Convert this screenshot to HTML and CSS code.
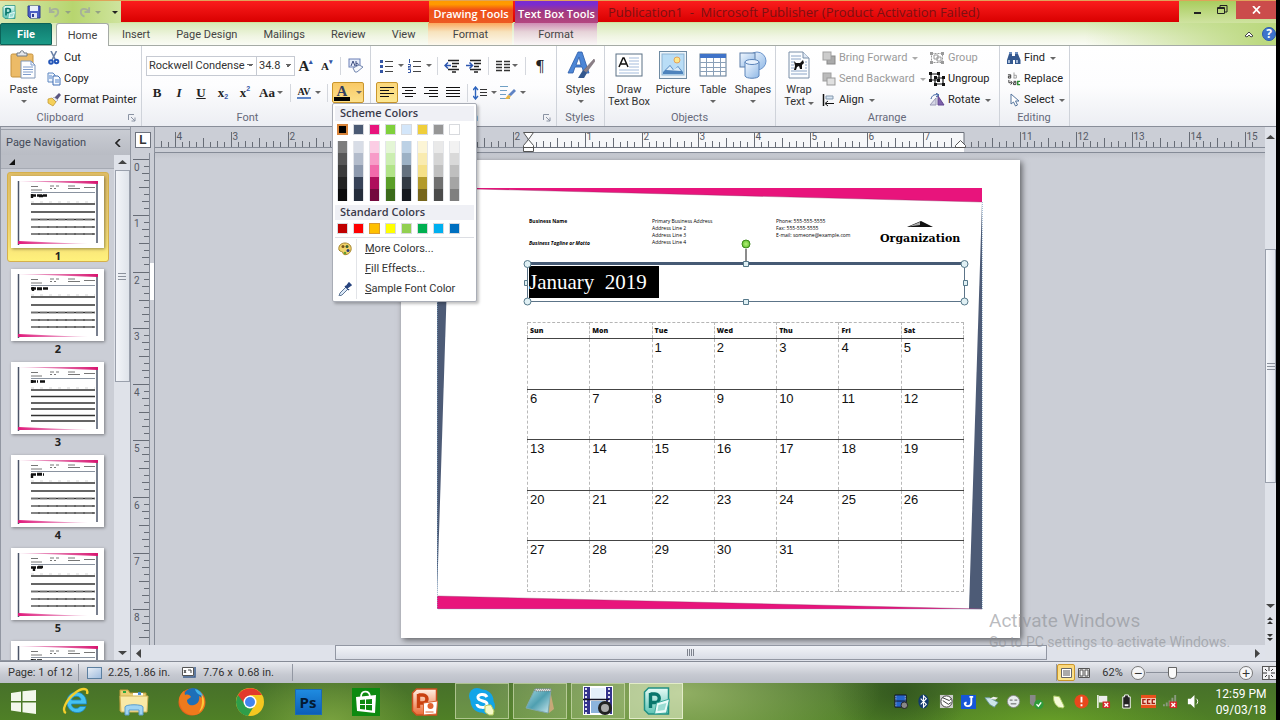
FILE: index.html
```html
<!DOCTYPE html>
<html lang="en">
<head>
<meta charset="utf-8">
<title>Publication1 - Microsoft Publisher</title>
<link rel="stylesheet" href="styles.css">
</head>
<body>
<svg class="defs" width="0" height="0" aria-hidden="true">
  <defs>
    <linearGradient id="g-blue" x1="0" y1="0" x2="1" y2="1"><stop offset="0" stop-color="#f2f8ff"/><stop offset="1" stop-color="#8fb8e6"/></linearGradient>
    <linearGradient id="g-teal" x1="0" y1="0" x2="0" y2="1"><stop offset="0" stop-color="#e6fbf6"/><stop offset="1" stop-color="#5cc4b4"/></linearGradient>
    <linearGradient id="g-orange" x1="0" y1="0" x2="0" y2="1"><stop offset="0" stop-color="#fff1e4"/><stop offset="1" stop-color="#ec6a35"/></linearGradient>
    <linearGradient id="g-pad" x1="0" y1="0" x2="1" y2="1"><stop offset="0" stop-color="#a9dbe4"/><stop offset=".5" stop-color="#4f9fb0"/><stop offset="1" stop-color="#cfeaf0"/></linearGradient>
    <linearGradient id="g-pink" x1="0" x2="1"><stop offset="0" stop-color="#e0187a"/><stop offset="1" stop-color="#d9509a" stop-opacity=".3"/></linearGradient>
    <linearGradient id="g-pinkr" x1="1" x2="0"><stop offset="0" stop-color="#d8146f"/><stop offset="1" stop-color="#d9509a" stop-opacity=".4"/></linearGradient>
    <radialGradient id="g-rot"><stop offset="0" stop-color="#b6f27a"/><stop offset="1" stop-color="#62c12c"/></radialGradient>
  </defs>
  <symbol id="i-pub" viewBox="0 0 28 28"><path d="M6 1h20v26H6l-4-4V5z" fill="url(#g-teal)" stroke="#1f8f83" stroke-width="1.5"/><path d="M8 6v15M8 7h4.500a4 4 0 0 1 0 8.500H8" fill="none" stroke="#08766c" stroke-width="3.400"/><path d="M14 16l13-4-3 14-12 1z" fill="#e8fbf8" stroke="#39a89b"/><path d="M16 18l8-2-2 7-7 1z" fill="#9adcd3"/></symbol>
  <symbol id="i-ppt" viewBox="0 0 28 28"><path d="M6 1h20v26H6l-4-4V5z" fill="url(#g-orange)" stroke="#c9501f" stroke-width="1.500"/><path d="M8 6v14M8 7h4.500a4 4 0 0 1 0 8H8" fill="none" stroke="#c9400f" stroke-width="3.400"/><path d="M13 15l14-2-1 13-13 1z" fill="#fff" stroke="#d9622f"/><circle cx="20" cy="18" r="3" fill="#e0622f"/><path d="M15 24h8" stroke="#e0622f"/></symbol>
  <symbol id="i-save" viewBox="0 0 14 14"><path d="M1 1h12v12H3l-2-2z" fill="#4c5fc4" stroke="#2e3c91"/><path d="M3 1h8v5H3z" fill="#e9f0fb"/><path d="M4 8h6v5H4z" fill="#dfe4f4"/><path d="M5 9h2v3H5z" fill="#2e3c91"/></symbol>
  <symbol id="i-undo" viewBox="0 0 14 12"><path d="M2 1v5h5M2.500 5.500C5 1.500 11 1.500 11 6c0 2-1.500 4-4 5" fill="none" stroke="#a6b19a" stroke-width="2"/></symbol>
  <symbol id="i-paste" viewBox="0 0 28 30"><rect x="1" y="4" width="22" height="23" rx="1.500" fill="#ecbb67" stroke="#c4913d"/><path d="M7 6V3h3c0-3 4-3 4 0h3v3z" fill="#e2e5ea" stroke="#6f7883"/><path d="M11 11h10l4 4v13H11z" fill="#fdfeff" stroke="#8197b7"/><path d="M21 11v4h4M13 17h10M13 19.500h10M13 22h10M13 24.500h8" fill="none" stroke="#7e9ccc"/></symbol>
  <symbol id="i-cut" viewBox="0 0 14 14"><path d="M4 0l4.500 9M9.500 0L5 9" stroke="#6b82a8" stroke-width="1.600"/><circle cx="4" cy="11" r="1.800" fill="none" stroke="#2456b8" stroke-width="2"/><circle cx="9.500" cy="10.500" r="1.800" fill="none" stroke="#2456b8" stroke-width="2"/></symbol>
  <symbol id="i-copy" viewBox="0 0 14 14"><path d="M1 1h5l2 2v7H1z" fill="#eef5fe" stroke="#5c86c0"/><path d="M6 4h5l2 2v7H6z" fill="#f8fbff" stroke="#3e6db3"/><path d="M2 4h3M2 6h3M8 8h4M8 10h4" stroke="#5686cb"/></symbol>
  <symbol id="i-brush" viewBox="0 0 14 14"><path d="M12 0l2 2-4 5-3-2z" fill="#5a5680"/><path d="M7 4l4 3-2 2-4-3z" fill="#e8ecf3" stroke="#8a8a9a" stroke-width=".5"/><path d="M1 6l4-1 4 4-3 4-5-3z" fill="#f5d05a" stroke="#be922a" stroke-width=".7"/></symbol>
  <symbol id="i-launch" viewBox="0 0 8 8"><path d="M.5 6V.5H6" fill="none" stroke="#8a93a3"/><path d="M3 3l4 4M7 3.500V7H3.500" fill="none" stroke="#8a93a3"/></symbol>
  <symbol id="i-clear" viewBox="0 0 16 16"><rect x="1" y="1" width="11" height="8" fill="#e8eefb" stroke="#6a7fb5"/><path d="M3 8l2-5 2 5M8 3v5M8 5.500c3-1 3 2.500 0 2" stroke="#38497d" fill="none"/><path d="M5 10l6-3 4 2-6 5H7z" fill="#f7f9fd" stroke="#7588b0"/></symbol>
  <symbol id="i-bul" viewBox="0 0 14 14"><path d="M0 1h3v3H0zM0 6h3v3H0zM0 11h3v3H0z" fill="#3556a5"/><path d="M5 2.500h8M5 7.500h8M5 12.500h8" stroke="#444"/></symbol>
  <symbol id="i-num" viewBox="0 0 14 14"><path d="M1.500 0v4M0 5.500h2.500v2H0V9h3M0 10.500h2.500v3H0" stroke="#3556a5" fill="none"/><path d="M5 2.500h8M5 7.500h8M5 12.500h8" stroke="#444"/></symbol>
  <symbol id="i-dedent" viewBox="0 0 16 14"><path d="M4 1.500h11M8 4.500h7M8 7.500h5M4 10.500h11M8 13h4" stroke="#222" stroke-width="1.300"/><path d="M7 6.500H1M4 3.500l-3 3 3 3" fill="none" stroke="#2c56b0" stroke-width="1.500"/></symbol>
  <symbol id="i-indent" viewBox="0 0 16 14"><path d="M4 1.500h11M8 4.500h7M8 7.500h5M4 10.500h11M8 13h4" stroke="#222" stroke-width="1.300"/><path d="M0 6.500h6M3.500 3.500l3 3-3 3" fill="none" stroke="#2c56b0" stroke-width="1.500"/></symbol>
  <symbol id="i-cols" viewBox="0 0 14 12"><path d="M0 1.500h6M0 4.500h6M0 7.500h6M0 10.500h6M8 1.500h6M8 4.500h6M8 7.500h6M8 10.500h6" stroke="#333" stroke-width="1.300"/></symbol>
  <symbol id="i-left" viewBox="0 0 14 12"><path d="M0 .5h14M0 3.500h9M0 6.500h14M0 9.500h9" stroke="#111"/></symbol>
  <symbol id="i-center" viewBox="0 0 14 12"><path d="M0 .5h14M3 3.500h8M0 6.500h14M3 9.500h8" stroke="#111"/></symbol>
  <symbol id="i-right" viewBox="0 0 14 12"><path d="M0 .5h14M5 3.500h9M0 6.500h14M5 9.500h9" stroke="#111"/></symbol>
  <symbol id="i-just" viewBox="0 0 14 12"><path d="M0 .5h14M0 3.500h14M0 6.500h14M0 9.500h14" stroke="#111"/></symbol>
  <symbol id="i-space" viewBox="0 0 14 14"><path d="M2.500 1v12M0 4l2.500-3L5 4M0 10l2.500 3L5 10" fill="none" stroke="#2c63bd" stroke-width="1.400"/><path d="M7 3.500h7M7 6.500h7M7 9.500h7" stroke="#333"/></symbol>
  <symbol id="i-pstyle" viewBox="0 0 16 15"><path d="M0 1.500h8M0 5.500h7M0 9.500h6M0 13.500h10" stroke="#6f9fc4"/><path d="M14 4l2 2-5 5-3-1z" fill="#5f83c4"/><path d="M8 10l3 1-2 3-4 0z" fill="#e7b440"/></symbol>
  <symbol id="i-styles" viewBox="0 0 28 28"><path d="M11 1h4l7 21h-5l-2-6H8l-2 6H1zM12 6l-3 8h5z" fill="#4c86d6" stroke="#2c5ca8" stroke-width=".8"/><path d="M27 8l1 2-9 12-3-2z" fill="#8b7f86" stroke="#6b5f66" stroke-width=".5"/><path d="M16 19l4 3-3 5-6 0z" fill="#35598f"/></symbol>
  <symbol id="i-tbox" viewBox="0 0 28 28"><rect x="1" y="3" width="26" height="22" fill="#fff" stroke="#5b7185"/><path d="M4 16l4-9h1l4 9M6 13h5" fill="none" stroke="#111" stroke-width="1.500"/><path d="M14 7h10M14 10h10M14 13h10M14 16h10M4 19h20M4 22h20" stroke="#a3bbdc"/></symbol>
  <symbol id="i-pic" viewBox="0 0 28 28"><rect x=".5" y=".5" width="27" height="27" fill="#eef5fa" stroke="#6f8ba3"/><rect x="3" y="3" width="22" height="21" fill="#b9ddf6" stroke="#8db3d2"/><circle cx="18" cy="9" r="3" fill="#fde88a" stroke="#e5a35c"/><path d="M4 21l7-7 4 5 4-4 5 6v2H4z" fill="#4d83bd"/><path d="M7 19l4-4 3 4 5-3 3 4z" fill="#dcedf9"/></symbol>
  <symbol id="i-table" viewBox="0 0 28 28"><rect x="1" y="3" width="26" height="22" fill="#fff" stroke="#5c7690"/><path d="M1 3h26v4H1z" fill="#3f73c8"/><path d="M1 11.500h26M1 16.500h26M1 20.500h26M7.500 7v18M14.500 7v18M21.500 7v18" stroke="#8aa0b8"/></symbol>
  <symbol id="i-shapes" viewBox="0 0 28 28"><circle cx="18" cy="10" r="9" fill="url(#g-blue)" stroke="#6b94cb"/><rect x="1" y="2" width="15" height="14" fill="url(#g-blue)" stroke="#5b7ca8"/><path d="M6 11v14c1 3 13 3 14 0V11z" fill="url(#g-blue)" stroke="#5b84ba"/><ellipse cx="13" cy="11" rx="7" ry="2.500" fill="#e6f1fd" stroke="#5b84ba"/></symbol>
  <symbol id="i-wrap" viewBox="0 0 26 28"><path d="M3 1h14l6 6v20H3z" fill="#fbfdff" stroke="#7a8fa8"/><path d="M17 1v6h6" fill="#dfe9f5" stroke="#7a8fa8"/><path d="M5 5h10M5 8h10M5 11h3M19 11h2M5 14h3M19 14h2M5 17h3M19 17h2M5 20h16M5 23h16" stroke="#8ba4c6"/><path d="M8 10l2 2h4l3-3 1 3-2 2v4h-2l-1-3-2 1-1 3H8l1-4z" fill="#111"/></symbol>
  <symbol id="i-fwd" viewBox="0 0 14 14"><rect x="5" y="5" width="8" height="8" fill="#aaa" stroke="#888"/><rect x="1" y="1" width="8" height="8" fill="#ccc" stroke="#a0a0a0"/></symbol>
  <symbol id="i-back" viewBox="0 0 14 14"><rect x="1" y="1" width="8" height="8" fill="#bbb" stroke="#a0a0a0"/><rect x="5" y="6" width="8" height="7" fill="#e0e0e0" stroke="#999"/></symbol>
  <symbol id="i-align" viewBox="0 0 14 14"><path d="M1.500 1v12" stroke="#111" stroke-width="1.500"/><path d="M4 3h7v3H4z" fill="#d8e6f3" stroke="#8397ac"/><path d="M4 10.500h8M6 8l-3 2.500L6 13" stroke="#111" fill="none"/></symbol>
  <symbol id="i-group" viewBox="0 0 16 14"><path d="M2.500 2.500h11v9h-11z" fill="none" stroke="currentColor" stroke-dasharray="2 1"/><path d="M1 1h3v3H1zM12 1h3v3h-3zM1 10h3v3H1zM12 10h3v3h-3z" fill="currentColor"/><path d="M5 4h4v4H5zM8 6h4v4H8z" fill="#fff" stroke="currentColor"/></symbol>
  <symbol id="i-ungroup" viewBox="0 0 16 14"><path d="M2 2h8v6H2zM6 6h8v6H6z" fill="none" stroke="#111" stroke-width="1.200"/><path d="M0 0h3v3H0zM8 0h3v3H8zM0 7h3v3H0zM8 7h3v3H8zM5 4h3v3H5zM13 4h3v3h-3zM5 11h3v3H5zM13 11h3v3h-3z" fill="#111"/></symbol>
  <symbol id="i-rot" viewBox="0 0 16 14"><path d="M1 12L7 5v7z" fill="#d6d6e6" stroke="#9a9ab5"/><path d="M9 12V3l6 9z" fill="#7e62ac" stroke="#604590"/><path d="M2 6c1-4 4-5 7-4M7 0l3 2-3 2" fill="none" stroke="#345a9c"/></symbol>
  <symbol id="i-find" viewBox="0 0 14 14"><path d="M2 3h3v2h3V3h3l2.500 6v4H8V9H6v4H0V9z" fill="#35598f"/><path d="M2 1h3v2H2zM8 1h3v2H8z" fill="#6d8fc0"/><path d="M2 9v3M10 9v3" stroke="#c7d9ef" stroke-width="1.500"/></symbol>
  <symbol id="i-repl" viewBox="0 0 15 14"><path d="M1 2.500h3V6H1.500V4H4" fill="none" stroke="#333"/><path d="M7.500 0v6M7.500 3h2.500v3H7" fill="none" stroke="#999"/><path d="M2 8v3h3M4 9l1.500 2L4 13" fill="none" stroke="#333"/><path d="M7 9.500h2.500V13H7v-2h2" fill="none" stroke="#333"/><path d="M14 9.500h-2.500V13H14" fill="none" stroke="#2a8a32" stroke-width="1.500"/></symbol>
  <symbol id="i-ptr" viewBox="0 0 12 14"><path d="M3 1v10l2.500-2 2 4 2-1-2-4H11z" fill="#fff" stroke="#54749d"/></symbol>
  <symbol id="i-palette" viewBox="0 0 14 14"><path d="M7 1c4 0 7 3 6 7-1 5-8 6-8 3 0-2-3-1-4-3C0 4 3 1 7 1z" fill="#f1d36a" stroke="#a5842b"/><circle cx="5" cy="4.500" r="1.500" fill="#7c5418"/><circle cx="9" cy="4.500" r="1.500" fill="#3a5f30"/><circle cx="10" cy="8.500" r="1.500" fill="#263d80"/><circle cx="7" cy="11" r="1.300" fill="#66a02e"/></symbol>
  <symbol id="i-drop" viewBox="0 0 14 14"><path d="M8 5l2 2-6 6-3 1 1-3z" fill="#dce9f8" stroke="#5f7796"/><path d="M7 4l4 4M8 5l3-4 2 2-4 3z" fill="#27437e" stroke="#27437e" stroke-width="1.500"/></symbol>
  <symbol id="thumb" viewBox="0 0 93 72"><path d="M7.500 5v64" stroke="#4b5468" stroke-width="1.500"/><path d="M86 6v61" stroke="#4b5468" stroke-width="1.500"/><path d="M7 5h80v3z" fill="url(#g-pinkr)"/><path d="M7 65l70 3H7z" fill="url(#g-pink)"/><path d="M20 10.500h7M20 14h11M39 10h4M45 10h3M39 12.500h2M43 12.500h2M57 10h7M57 12.500h12M73 11.500h11" stroke="#777"/><path d="M20 16.500h64" stroke="#8a93a0"/><path d="M20 26h64" stroke="#bbb" stroke-width=".6" stroke-dasharray="3 6"/></symbol>
  <symbol id="rows5" viewBox="0 0 93 72"><path d="M20 28h64M20 36h64M20 43.500h64M20 51h64M20 58h64" stroke="#333" stroke-width="1.300"/><path d="M20 43.500h64M20 51h64M20 58h64" stroke="#999" stroke-width="2" stroke-dasharray="7 2" opacity=".6"/></symbol>
  <symbol id="rows6" viewBox="0 0 93 72"><path d="M20 28h64M20 34.500h64M20 41h64M20 47h64M20 53.500h64M20 59h64" stroke="#333" stroke-width="1.300"/></symbol>
</svg>

<header class="titlebar">
  <div class="quick">
    <svg class="app" viewBox="0 0 28 28"><use href="#i-pub"/></svg>
    <span class="vline"></span>
    <button aria-label="Save"><svg width="14" height="14"><use href="#i-save"/></svg></button>
    <button class="off" aria-label="Undo"><svg width="13" height="12"><use href="#i-undo"/></svg><i class="caret"></i></button>
    <button class="off redo" aria-label="Redo"><svg width="13" height="12"><use href="#i-undo"/></svg><i class="caret"></i></button>
    <span class="vline"></span>
    <button aria-label="Customize"><i class="caret bar"></i></button>
  </div>
  <div class="banner">
    <span class="ctx drawing">Drawing Tools</span>
    <span class="ctx textbox">Text Box Tools</span>
    <h1>Publication1&nbsp; -&nbsp; Microsoft Publisher (Product Activation Failed)</h1>
  </div>
  <div class="winbtns">
    <button aria-label="Minimize"><svg width="10" height="10" viewBox="0 0 10 10"><path d="M1 8h7" stroke="#222" stroke-width="2"/></svg></button>
    <button aria-label="Restore"><svg width="11" height="10" viewBox="0 0 11 10"><path d="M3 2V.5h7V7H8M.5 2.500h7v6h-7zM.5 3.500h7" fill="none" stroke="#222"/></svg></button>
    <button class="close" aria-label="Close"><svg width="9" height="8" viewBox="0 0 9 8"><path d="M1 0l7 7.500M8 0L1 7.500" stroke="#fff" stroke-width="1.800"/></svg></button>
  </div>
</header>

<nav class="tabs">
  <button class="tab file">File</button>
  <button class="tab home">Home</button>
  <button class="tab">Insert</button>
  <button class="tab">Page Design</button>
  <button class="tab">Mailings</button>
  <button class="tab">Review</button>
  <button class="tab">View</button>
  <button class="tab tdraw">Format</button>
  <button class="tab ttext">Format</button>
  <span class="grow"></span>
  <button class="mini" aria-label="Collapse ribbon"><svg width="10" height="8" viewBox="0 0 10 8"><path d="M1 6l4-4 4 4-2 1-2-2-2 2z" fill="#fff" stroke="#444"/></svg></button>
  <button class="help" aria-label="Help">?</button>
</nav>

<main class="ribbon">
  <section class="group clipboard">
    <div class="cols">
      <button class="big"><svg width="28" height="30"><use href="#i-paste"/></svg><span>Paste</span><i class="caret"></i></button>
      <div class="stack">
        <button><svg width="14" height="14"><use href="#i-cut"/></svg>Cut</button>
        <button><svg width="14" height="14"><use href="#i-copy"/></svg>Copy</button>
        <button><svg width="14" height="14"><use href="#i-brush"/></svg>Format Painter</button>
      </div>
    </div>
    <footer><span>Clipboard</span><svg width="8" height="8"><use href="#i-launch"/></svg></footer>
  </section>

  <section class="group font">
    <div class="rows">
      <div class="row">
        <select class="face" aria-label="Font"><option>Rockwell Condense</option></select><select class="size" aria-label="Font size"><option>34.8</option></select>
        <button class="t serif grow-a" aria-label="Grow font">A<sup>▴</sup></button>
        <button class="t serif shrink-a" aria-label="Shrink font">A<sup>▾</sup></button>
        <span class="sep"></span>
        <button class="t" aria-label="Clear formatting"><svg width="16" height="16"><use href="#i-clear"/></svg></button>
      </div>
      <div class="row">
        <button class="t serif">B</button>
        <button class="t serif"><em>I</em></button>
        <button class="t serif"><u>U</u></button>
        <button class="t serif">x<sub>2</sub></button>
        <button class="t serif">x<sup>2</sup></button>
        <button class="t serif wide">Aa<i class="caret"></i></button>
        <span class="sep"></span>
        <button class="t av"><span>AV</span><i class="caret"></i></button>
        <span class="sep"></span>
        <div class="drop">
          <button class="fcolor" aria-label="Font color"><span class="serif">A</span><i class="caret"></i></button>
          <div class="menu">
            <h2>Scheme Colors</h2>
            <div class="sw" id="scheme"></div>
            <div class="shades" id="shades"></div>
            <h2>Standard Colors</h2>
            <div class="sw" id="standard"></div>
            <ul>
              <li><button><svg width="14" height="14"><use href="#i-palette"/></svg><span><u>M</u>ore Colors...</span></button></li>
              <li><button><svg width="14" height="14"></svg><span><u>F</u>ill Effects...</span></button></li>
              <li><button><svg width="14" height="14"><use href="#i-drop"/></svg><span><u>S</u>ample Font Color</span></button></li>
            </ul>
          </div>
        </div>
      </div>
    </div>
    <footer><span>Font</span></footer>
  </section>

  <section class="group para">
    <div class="rows">
      <div class="row first">
        <button class="t wd" aria-label="Bullets"><svg width="14" height="14"><use href="#i-bul"/></svg><i class="caret"></i></button>
        <button class="t wd" aria-label="Numbering"><svg width="14" height="14"><use href="#i-num"/></svg><i class="caret"></i></button>
        <span class="sep"></span>
        <button class="t" aria-label="Decrease indent"><svg width="16" height="14"><use href="#i-dedent"/></svg></button>
        <button class="t" aria-label="Increase indent"><svg width="16" height="14"><use href="#i-indent"/></svg></button>
        <span class="sep"></span>
        <button class="t wide" aria-label="Columns"><svg width="14" height="12"><use href="#i-cols"/></svg><i class="caret"></i></button>
        <span class="sep"></span>
        <button class="t pil">¶</button>
      </div>
      <div class="row">
        <button class="t on" aria-label="Align left"><svg width="14" height="12"><use href="#i-left"/></svg></button>
        <button class="t" aria-label="Center"><svg width="14" height="12"><use href="#i-center"/></svg></button>
        <button class="t" aria-label="Align right"><svg width="14" height="12"><use href="#i-right"/></svg></button>
        <button class="t" aria-label="Justify"><svg width="14" height="12"><use href="#i-just"/></svg></button>
        <span class="sep"></span>
        <button class="t wd" aria-label="Line spacing"><svg width="14" height="14"><use href="#i-space"/></svg><i class="caret"></i></button>
        <button class="t wd" aria-label="Paragraph styles"><svg width="16" height="15"><use href="#i-pstyle"/></svg><i class="caret"></i></button>
      </div>
    </div>
    <footer><span>Paragraph</span><svg width="8" height="8"><use href="#i-launch"/></svg></footer>
  </section>

  <section class="group styles">
    <div class="cols"><button class="big"><svg width="28" height="30"><use href="#i-styles"/></svg><span>Styles</span><i class="caret"></i></button></div>
    <footer><span>Styles</span></footer>
  </section>

  <section class="group objects">
    <div class="cols">
      <button class="big w48"><svg width="28" height="30"><use href="#i-tbox"/></svg><span>Draw<br>Text Box</span></button>
      <button class="big"><svg width="28" height="30"><use href="#i-pic"/></svg><span>Picture</span></button>
      <button class="big"><svg width="28" height="30"><use href="#i-table"/></svg><span>Table</span><i class="caret"></i></button>
      <button class="big"><svg width="28" height="30"><use href="#i-shapes"/></svg><span>Shapes</span><i class="caret"></i></button>
    </div>
    <footer><span>Objects</span></footer>
  </section>

  <section class="group arrange">
    <div class="cols">
      <button class="big"><svg width="26" height="30"><use href="#i-wrap"/></svg><span>Wrap<br>Text <i class="caret"></i></span></button>
      <div class="stack">
        <button disabled><svg width="14" height="14"><use href="#i-fwd"/></svg>Bring Forward<i class="caret"></i></button>
        <button disabled><svg width="14" height="14"><use href="#i-back"/></svg>Send Backward<i class="caret"></i></button>
        <button><svg width="14" height="14"><use href="#i-align"/></svg>Align<i class="caret"></i></button>
      </div>
      <div class="stack">
        <button disabled><svg width="16" height="14"><use href="#i-group"/></svg>Group</button>
        <button><svg width="16" height="14"><use href="#i-ungroup"/></svg>Ungroup</button>
        <button><svg width="16" height="14"><use href="#i-rot"/></svg>Rotate<i class="caret"></i></button>
      </div>
    </div>
    <footer><span>Arrange</span></footer>
  </section>

  <section class="group editing">
    <div class="cols"><div class="stack">
      <button><svg width="14" height="14"><use href="#i-find"/></svg>Find<i class="caret"></i></button>
      <button><svg width="14" height="14"><use href="#i-repl"/></svg>Replace</button>
      <button><svg width="14" height="14"><use href="#i-ptr"/></svg>Select<i class="caret"></i></button>
    </div></div>
    <footer><span>Editing</span></footer>
  </section>
</main>

<div class="work">
  <aside class="pane">
    <header>Page Navigation<svg width="6" height="8" viewBox="0 0 6 8"><path d="M5 0L1 4l4 4" fill="none" stroke="#222" stroke-width="1.600"/></svg></header>
    <div class="panebody">
      <div class="left">
        <div class="strip"><svg width="6" height="6" viewBox="0 0 6 6"><path d="M6 0v6H0z" fill="#111"/></svg></div>
        <ol class="thumbs" id="thumbs"></ol>
      </div>
      <div class="vbar">
        <svg width="9" height="6" viewBox="0 0 9 6"><path d="M4.500 1L9 5H0z" fill="#444"/></svg>
        <div class="vthumb"><i></i></div>
        <svg class="end" width="9" height="6" viewBox="0 0 9 6"><path d="M4.500 5L9 1H0z" fill="#444"/></svg>
      </div>
    </div>
  </aside>

  <div class="editor">
    <div class="corner"><span>L</span></div>
    <svg class="hruler" id="hruler" width="100%" height="26"></svg>
    <svg class="vruler" id="vruler" width="24" height="100%"></svg>
    <div class="canvas">
      <article class="page">
        <svg class="deco" viewBox="0 0 619 477" aria-hidden="true">
          <path d="M36 28h13L36 436z" fill="#4d5b76"/>
          <path d="M581 42v407h-13z" fill="#4d5b76"/>
          <path d="M36 28h545v14z" fill="#e8147c"/>
          <path d="M36 436v13h545z" fill="#e8147c"/>
          <path d="M36 28l545 14M36 436l545 13" stroke="#8a2a5c" stroke-width=".6" opacity=".6"/>
          <path d="M36.500 28v421h545V42" fill="none" stroke="#7fa3c4" stroke-width=".7" stroke-dasharray="1 1"/>
        </svg>
        <header class="letter">
          <div class="biz"><strong>Business Name</strong><em>Business Tagline or Motto</em></div>
          <address>Primary Business Address<br>Address Line 2<br>Address Line 3<br>Address Line 4</address>
          <address>Phone: 555-555-5555<br>Fax: 555-555-5555<br>E-mail: someone@example.com</address>
          <div class="org"><svg width="26" height="6" viewBox="0 0 26 6"><path d="M0 6L14 0l12 6z" fill="#111"/><path d="M2 5.500L13 1v3z" fill="#aaa"/></svg>Organization</div>
        </header>
        <div class="tbox">
          <span class="sel">January&nbsp; 2019</span>
          <svg class="handles" viewBox="0 0 450 72" width="450" height="72" aria-hidden="true">
            <path d="M6.500 26v38.500h437V26" fill="none" stroke="#5c7488"/>
            <path d="M6 26.500h438" stroke="#465a74" stroke-width="3"/>
            <path d="M225 12v14" stroke="#666" stroke-width="1.500"/>
            <circle cx="225" cy="7" r="4" fill="url(#g-rot)" stroke="#3f8a1e"/>
            <g fill="#e0f0f4" stroke="#56798a"><circle cx="6.500" cy="27" r="3.500"/><circle cx="443.500" cy="27" r="3.500"/><circle cx="6.500" cy="64.500" r="3.500"/><circle cx="443.500" cy="64.500" r="3.500"/><path d="M222.500 24.500h5v5h-5zM222.500 62.500h5v5h-5zM442.500 43.500h4v5h-4zM3.500 43.500h3v5h-3z"/></g>
          </svg>
        </div>
        <table class="cal">
          <thead><tr><th>Sun</th><th>Mon</th><th>Tue</th><th>Wed</th><th>Thu</th><th>Fri</th><th>Sat</th></tr></thead>
          <tbody>
            <tr><td></td><td></td><td>1</td><td>2</td><td>3</td><td>4</td><td>5</td></tr>
            <tr><td>6</td><td>7</td><td>8</td><td>9</td><td>10</td><td>11</td><td>12</td></tr>
            <tr><td>13</td><td>14</td><td>15</td><td>16</td><td>17</td><td>18</td><td>19</td></tr>
            <tr><td>20</td><td>21</td><td>22</td><td>23</td><td>24</td><td>25</td><td>26</td></tr>
            <tr><td>27</td><td>28</td><td>29</td><td>30</td><td>31</td><td></td><td></td></tr>
          </tbody>
        </table>
      </article>
    </div>
    <div class="hbar">
      <svg width="6" height="9" viewBox="0 0 6 9"><path d="M0 4.500L5 0v9z" fill="#444"/></svg>
      <div class="htrack"><div class="hthumb"><i></i></div></div>
      <svg width="6" height="9" viewBox="0 0 6 9"><path d="M6 4.500L1 0v9z" fill="#444"/></svg>
    </div>
    <div class="mark"><p>Activate Windows</p><p>Go to PC settings to activate Windows.</p></div>
  </div>

  <div class="vbar right">
    <svg width="9" height="6" viewBox="0 0 9 6"><path d="M4.500 1L9 5H0z" fill="#444"/></svg>
    <div class="vthumb"><i></i></div>
    <div class="end">
      <svg width="9" height="6" viewBox="0 0 9 6"><path d="M4.500 5L9 1H0z" fill="#444"/></svg>
      <svg width="8" height="8" viewBox="0 0 8 8"><path d="M4 0l3 3H1zM4 4l3 3H1z" fill="#333"/></svg>
      <svg width="8" height="8" viewBox="0 0 8 8"><path d="M4 4l3-3H1zM4 8l3-3H1z" fill="#333"/></svg>
    </div>
  </div>
</div>

<footer class="status">
  <span class="pg">Page: 1 of 12</span>
  <span class="vl"></span>
  <svg width="15" height="12" viewBox="0 0 15 12"><rect x=".5" y=".5" width="14" height="11" fill="url(#g-blue)" fill-opacity=".7" stroke="#5c7fa0"/></svg>
  <span class="pos">2.25, 1.86 in.</span>
  <svg width="14" height="11" viewBox="0 0 14 11"><path d="M.5.5h11v8H.5z" fill="#fff" stroke="#555"/><path d="M2 3l2 3M4 3L2 6M6 3h3v3" stroke="#444" fill="none"/><path d="M13 0v10H1" fill="none" stroke="#3c5f8f" stroke-width="1.500"/></svg>
  <span class="dim">7.76 x&nbsp; 0.68 in.</span>
  <span class="vl"></span>
  <span class="grow"></span>
  <span class="vl"></span>
  <button class="on" aria-label="Single page"><svg width="11" height="10" viewBox="0 0 11 10"><path d="M.5.5h10v9H.5z" fill="#fff" stroke="#666"/><path d="M2 3h7M2 5h7M2 7h7" stroke="#555"/></svg></button>
  <button aria-label="Two-page spread"><svg width="12" height="10" viewBox="0 0 12 10"><path d="M.5.5h11v9H.5z" fill="#ddd" stroke="#555"/><path d="M2 2h3v6H2zM7 2h3v6H7z" fill="#fff" stroke="#555"/></svg></button>
  <span class="pct">62%</span>
  <button class="zoom" aria-label="Zoom out">−</button>
  <input type="range" min="0" max="100" value="27" aria-label="Zoom">
  <button class="zoom" aria-label="Zoom in">+</button>
  <button class="fit" aria-label="Fit page"><svg width="14" height="14" viewBox="0 0 14 14"><rect x=".5" y=".5" width="16" height="13" fill="#f2f2f4" stroke="#555"/><path d="M7 1v4M7 9v4M1 7h4M9 7h4M3 3l2 2M11 3L9 5M3 11l2-2M11 11L9 9" stroke="#333"/></svg></button>
</footer>

<footer class="taskbar">
  <button class="start" aria-label="Start"><svg width="26" height="24" viewBox="0 0 26 24"><path d="M0 3l10-1.500V11H0zM11.500 1.300L25 0v11H11.500zM0 12.500h10V22L0 20.500zM11.500 12.500H25V24l-13.500-1.800z" fill="#f3f7ec"/></svg></button>
  <button class="app" aria-label="Internet Explorer"><svg width="30" height="30" viewBox="0 0 30 30"><path d="M25.500 17H10.500c0 5 6.500 5.500 8.500 2.500h6C23 25 17 27 11.500 24.500 5 21 4 12 9 7.500c6-5 17-2 16.500 9.500zM10.500 13h9.500c-.5-5-8.500-5-9.500 0z" fill="#45c2f1" stroke="#1c86c4" stroke-width=".8"/><path d="M5 26c-5-2 0-13 9-20 6-5 14-6 12 1" fill="none" stroke="#f4cf2c" stroke-width="2.400"/></svg></button>
  <button class="app" aria-label="File Explorer"><svg width="30" height="30" viewBox="0 0 30 30"><path d="M1 3h8l2 3h16v18H1z" fill="#e9cf74" stroke="#bf9b3b"/><path d="M4 4h3v2H4z" fill="#2aa840"/><path d="M14 6h10v3H14z" fill="#fff"/><path d="M19 5h3v3h-3z" fill="#4a90d8"/><path d="M1 9h28l-1 16H2z" fill="#f9e9a6" stroke="#d1b258"/><path d="M6 28v-8c0-3 18-3 18 0v8h-4v-5H10v5z" fill="#9fd4f2" stroke="#5a9dcc"/></svg></button>
  <button class="app" aria-label="Firefox"><svg width="30" height="30" viewBox="0 0 30 30"><circle cx="15" cy="15" r="13.500" fill="#e8601c"/><circle cx="16" cy="11" r="10" fill="#1d6fb8"/><path d="M2 12C4 5 7 4 7 4l1 4c3-1 5 0 6 2l-4 3c0 4 3 6 7 5 4-1 6-5 5-9l3 2-1-5c6 6 5 16-1 20-8 5-20 1-21-14z" fill="#ee7a1c"/><path d="M24 7c5 5 4 14-2 18 3-5 4-12 2-18z" fill="#fcc838"/><path d="M18 2c4 1 7 4 8 7-4-1-7-3-8-7z" fill="#43b3e6"/></svg></button>
  <button class="app" aria-label="Chrome"><svg width="30" height="30" viewBox="0 0 30 30"><circle cx="15" cy="15" r="14" fill="#f6c720"/><path d="M15 15H15L3 8a14 14 0 0 0 10 21l6-10z" fill="#2f9e4a"/><path d="M15 8h12a14 14 0 0 0-24 0l6 8z" fill="#e23a2c"/><circle cx="15" cy="15" r="6.500" fill="#fff"/><circle cx="15" cy="15" r="5" fill="#4384ee"/></svg></button>
  <button class="app"><span class="ps">Ps</span></button>
  <button class="app" aria-label="Store"><svg width="28" height="28" viewBox="0 0 28 28"><path d="M0 0h28v28H0z" fill="#0d8a10"/><path d="M4 9l20-2-1 18-18-2z" fill="#fff"/><path d="M9 9c0-7 8-7 9-1" fill="none" stroke="#fff" stroke-width="1.800"/><path d="M8 12l5-.5V16H8zM14 11.500l6-.5v5h-6zM8 17h5v4.500L8 21zM14 17h6v5.500l-6-.8z" fill="#0d8a10"/></svg></button>
  <button class="app" aria-label="PowerPoint"><svg width="29" height="28"><use href="#i-ppt"/></svg></button>
  <button class="app run" aria-label="Skype"><svg width="30" height="30" viewBox="0 0 30 30"><circle cx="10" cy="10" r="8" fill="#12a5e8"/><circle cx="20" cy="20" r="8" fill="#12a5e8"/><circle cx="15" cy="15" r="11.500" fill="#12a5e8"/><path d="M20 11c-2-4-10-3-9 1 1 4 9 2 9 6 0 5-10 4-10 0" fill="none" stroke="#fff" stroke-width="3"/><path d="M18 20l3-1 3 0 3 6-1 4-4 0-4-3z" fill="#f6f9c8" stroke="#b5c95c"/></svg></button>
  <button class="app run" aria-label="Notepad"><svg width="30" height="30" viewBox="0 0 30 30"><path d="M25 4l4 19-5 4z" fill="#c8a878"/><path d="M10 3h16l-3 24L1 22z" fill="url(#g-pad)" stroke="#7fa8ae"/><path d="M10 3h16v2H10z" fill="#ddd" stroke="#777" stroke-dasharray="1 1"/></svg></button>
  <button class="app run" aria-label="Movie Maker"><svg width="30" height="30" viewBox="0 0 30 30"><path d="M0 0h30v29H0z" fill="#fff"/><path d="M1 1h6v27H1zM23 1h6v27h-6z" fill="#34348c"/><path d="M8 2h14v11H8z" fill="#e4f0fa"/><path d="M8 15h14v12H8z" fill="#8cb4dc"/><path d="M3 2v26M26 2v26" stroke="#dde" stroke-width="2" stroke-dasharray="2 2"/><path d="M0 13.500h26" stroke="#112" stroke-width="1.500"/><circle cx="22" cy="22" r="7" fill="#222"/><circle cx="22" cy="22" r="4" fill="#aaa"/></svg></button>
  <button class="app run cur" aria-label="Publisher"><svg width="29" height="28"><use href="#i-pub"/></svg></button>
  <span class="grow"></span>
  <div class="tray">
    <svg viewBox="0 0 16 16"><path d="M1 1h12v13H1z" fill="#2464c8" stroke="#112"/><path d="M2 2v11M12 2v11" stroke="#ccd" stroke-dasharray="1 1"/><path d="M1 7.500h12" stroke="#112"/><circle cx="11" cy="12" r="3.500" fill="#888" stroke="#222"/></svg>
    <svg viewBox="0 0 16 16"><ellipse cx="8" cy="8" rx="5.500" ry="7.500" fill="#123a6e"/><path d="M5 5l6 6-3 3V2l3 3-6 6" fill="none" stroke="#fff" stroke-width="1.200"/></svg>
    <svg viewBox="0 0 16 16"><path d="M1 1h14v14H1z" fill="#ccc"/><circle cx="8" cy="8" r="6" fill="#fff" stroke="#333"/><path d="M4 4l7 3 2-2M4 7l6 4 3-2" stroke="#333" fill="none"/></svg>
    <svg viewBox="0 0 16 16"><path d="M0 1h16v15H0z" fill="#1656d8"/><path d="M9 3h4M11 3v6c0 5-7 5-7 1l2-1" fill="none" stroke="#fff" stroke-width="2"/></svg>
    <svg viewBox="0 0 16 16"><path d="M1 4l5 0 9 5-4 5-5-3z" fill="#cde6ea" stroke="#6f9aa0"/><path d="M6 5l6 1 3-2-5-1z" fill="#eee"/></svg>
    <svg viewBox="0 0 16 16"><circle cx="8" cy="8" r="6.500" fill="#e8ecee" stroke="#888"/><path d="M4 6.500h3M9 6.500h3M5 10.500h6" stroke="#555"/></svg>
    <svg viewBox="0 0 16 16"><path d="M1 1h6v9l-3 3-3-3z" fill="#888"/><circle cx="10.500" cy="11" r="5" fill="#2f9a3a"/><path d="M8 11l2 2 3-4" fill="none" stroke="#fff" stroke-width="1.500"/></svg>
    <svg viewBox="0 0 16 16"><path d="M3 2l6 1 5 10-1 2-5-1C4 11 2 7 3 2z" fill="#f6fbd8" stroke="#a9c860"/></svg>
    <svg viewBox="0 0 16 16"><circle cx="8" cy="8" r="7.500" fill="#e8481c"/><path d="M8 3v6M8 11v2" stroke="#fff" stroke-width="2"/></svg>
    <svg viewBox="0 0 16 16"><path d="M2 1v14" stroke="#fff" stroke-width="1.500"/><path d="M3 2h9v7H3z" fill="#eee"/><path d="M7 8h8v7H7z" fill="#d8262a"/><path d="M9 9.500l4 4M13 9.500l-4 4" stroke="#fff" stroke-width="1.500"/></svg>
    <svg viewBox="0 0 16 16"><path d="M6 1h4v2h2v12H4V3h2z" fill="#222" stroke="#fff"/><path d="M6 11h4v2H6z" fill="#fff"/></svg>
    <svg viewBox="0 0 16 16"><path d="M0 1h16v14H0z" fill="#e8501c"/><path d="M0 4.500h16v7H0z" fill="#f7dccb"/><path d="M5 6H2v4h3M10 6H7v4h3M15 6h-3v4h3" fill="none" stroke="#a51c10" stroke-width="1.500"/></svg>
    <svg viewBox="0 0 16 16"><path d="M1 13v-2M4 13v-4M7 13V7M10 13V4M13 13V1" stroke="#8a9a80" stroke-width="2"/><path d="M7 8h8v7H7z" fill="#d8262a"/><path d="M9 9.500l4 4M13 9.500l-4 4" stroke="#fff" stroke-width="1.500"/></svg>
    <svg viewBox="0 0 16 16"><path d="M2 5h3l4-4v14l-4-4H2z" fill="#fff"/><path d="M11 5c2 1 2 5 0 6" fill="none" stroke="#fff"/></svg>
  </div>
  <time class="clock">12:59 PM<br>09/03/18</time>
</footer>
<script src="app.js"></script>
</body>
</html>
```
FILE: app.js
```js
const NS = 'http://www.w3.org/2000/svg';
const INCH = 56.25;

function add(parent, tag, attrs, text) {
  const el = document.createElementNS(NS, tag);
  for (const k in attrs) el.setAttribute(k, attrs[k]);
  if (text !== undefined) el.textContent = text;
  parent.appendChild(el);
}

// Horizontal ruler: page starts at x = 246, the text box spans 373..809.
const h = document.getElementById('hruler');
const BOX_L = 373, BOX_R = 809, PAGE_X = 246;
add(h, 'path', { d: 'M0 20.500H4000M0 25.500H4000', stroke: '#858b97' });
add(h, 'rect', { x: BOX_L, y: 5, width: BOX_R - BOX_L, height: 20, fill: '#fcfcfd' });
add(h, 'path', { d: `M${BOX_L} 20.500V5.500H${BOX_R}V20.500Z`, fill: '#f6f7f9', stroke: '#6a6f79' });
function hticks(origin, from, to, min, max) {
  for (let i = from * 8; i <= to * 8; i++) {
    const x = Math.round(origin + i * INCH / 8) + 0.5;
    if (x < min || x > max) continue;
    const len = i % 8 === 0 ? 15 : i % 4 === 0 ? 9 : i % 2 === 0 ? 6 : 5;
    add(h, 'path', { d: `M${x} 20v-${len}`, stroke: '#676c76' });
    if (i % 8 === 0 && i !== from * 8) add(h, 'text', { x: x + 1, y: 13 }, Math.abs(i / 8));
  }
}
hticks(PAGE_X - 1, -5, 2, 5, BOX_L - 8);
hticks(BOX_L + 1, 0, 8, BOX_L + 6, BOX_R - 4);
hticks(PAGE_X, 10, 30, BOX_R + 4, 1104);
add(h, 'path', { d: 'M368.500 5.500h10l-5 7zM373.500 12.500l5 6v6h-10v-6zM368.500 20.500h10', fill: '#fff', stroke: '#555' });
add(h, 'path', { d: 'M800.500 20.500v-2l5-5 5 5v2z', fill: '#fff', stroke: '#555' });

// Vertical ruler: page starts at y = 6.
const v = document.getElementById('vruler');
add(v, 'path', { d: 'M18.500 0V2000M23.500 0V2000', stroke: '#858b97' });
add(v, 'rect', { x: 19, y: 110, width: 4, height: 37, fill: '#fff' });
for (let i = 0; i <= 68; i++) {
  const y = Math.round(6 + i * INCH / 8) + 0.5;
  const len = i % 8 === 0 ? 16 : i % 4 === 0 ? 10 : i % 2 === 0 ? 7 : 5;
  add(v, 'path', { d: `M18 ${y}h-${len}`, stroke: '#676c76' });
  if (i % 8 === 0) add(v, 'text', { x: 3, y: y + 11 }, i / 8);
}

// Colour menu.
const fill = (id, list, pick) => {
  document.getElementById(id).innerHTML = list
    .map((c, i) => `<button aria-label="${c}" class="${i === pick ? 'pick' : ''}" style="background:${c}"></button>`).join('');
};
fill('scheme', ['#000000', '#4b5a73', '#e8147c', '#7fd03c', '#d3e6fa', '#efce3b', '#969696', '#ffffff'], 0);
fill('standard', ['#c00000', '#ff0000', '#ffc000', '#ffff00', '#92d050', '#00b050', '#00b0f0', '#0070c0'], 2);
const shades = [
  ['#7d7d7d', '#575757', '#3b3b3b', '#222222', '#0b0b0b'],
  ['#d8dde6', '#b3bccb', '#8e9aae', '#384358', '#252d3b'],
  ['#fbcde4', '#f79cc8', '#f16aab', '#ae0e5c', '#74093e'],
  ['#e4f6d6', '#cbeeb1', '#b1e388', '#5a9e28', '#3b6a1a'],
  ['#bcd1e5', '#9cb1c5', '#64717f', '#323a44', '#15191f'],
  ['#fcf5d6', '#f9ebb0', '#f5e088', '#b39a2a', '#77661b'],
  ['#e9e9e9', '#d5d5d5', '#c0c0c0', '#707070', '#4b4b4b'],
  ['#f2f2f2', '#d9d9d9', '#bfbfbf', '#a5a5a5', '#7f7f7f']
];
document.getElementById('shades').innerHTML = shades
  .map(col => '<div>' + col.map(c => `<button aria-label="${c}" style="background:${c}"></button>`).join('') + '</div>').join('');

// Page thumbnails; each has a short block for the month's name. The last one is half scrolled out.
const names = [
  'M20 19.500h16M21 18v4M28 20h4M32 19.500h4',
  'M20 19.500h18M22 18v4M26 20h6M34 19.500h3',
  'M20 19.500h7M21 18v3M29 19.500h5',
  'M20 19.500h13M21 19v4M26 19h6',
  'M20 19.500h12M23 20v3M27 19h5',
  'M20 19.500h12M21 18v4'
];
document.getElementById('thumbs').innerHTML = names.map((d, i) => `
  <li class="${i === 0 ? 'cur' : ''}"><svg viewBox="0 0 93 72" width="93" height="72"><use href="#thumb"/>
  <use href="#rows${i === 2 ? 6 : 5}"/><path d="${d}" stroke="#111" stroke-width="2.400" stroke-dasharray="5 1" fill="none"/></svg>${i < 5 ? `<b>${i + 1}</b>` : ''}</li>`).join('');
```
FILE: styles.css
```css
* { box-sizing: border-box; }
html, body { height: 100%; }
body {
  margin: 0; padding-right: 4px; background: #000; overflow: hidden;
  display: flex; flex-direction: column;
  font: 11px/12px Roboto, "Open Sans", sans-serif; color: #333;
}
button, select, input { font: inherit; color: inherit; margin: 0; padding: 0; border: 0; background: none; }
button { display: flex; align-items: center; justify-content: center; white-space: nowrap; }
h1, h2, p, ul, ol { margin: 0; padding: 0; font: inherit; list-style: none; }
svg { flex: none; display: block; }
.defs { position: absolute; }
.grow { flex: 1; }
.serif { font-family: "Liberation Serif", serif; font-weight: bold; }
.caret { display: inline-block; flex: none; border: 3px solid transparent; border-top-color: #666; border-bottom: 0; }

/* title bar */
.titlebar { flex: none; height: 23px; display: flex; border-top: 1px solid #dfa35a; background: linear-gradient(#a9cd5e, #cfe3a0); }
.quick { width: 121px; flex: none; display: flex; align-items: center; padding-left: 2px; background: linear-gradient(90deg, #d7e8b0, #b7d56f 60%, #cfe49e); }
.quick .app { width: 14px; height: 16px; }
.quick .vline { width: 1px; height: 12px; background: #7d8f5a; margin: 0 7px 0 4px; }
.quick button { height: 18px; gap: 4px; margin-right: 7px; }
.quick button + .vline { margin: 0 4px 0 0; }
.quick .off .caret { border-top-color: #93a183; }
.quick .redo svg { transform: scaleX(-1); }
.quick .bar { border-top-color: #222; box-shadow: 0 -3px 0 -2px #222; }
.banner { flex: 1; min-width: 0; height: 21px; display: flex; padding-left: 308px; background: linear-gradient(#fb1d1d, #d90000); }
.ctx { display: flex; flex: none; height: 22px; align-items: center; justify-content: center; padding-top: 3px; color: #fff; font: 600 11px/14px "Open Sans", sans-serif; }
.drawing { width: 84px; background: linear-gradient(#ff9a00 15%, #f04f17 40%, #ec5a22); }
.textbox { width: 83px; margin-left: 2px; background: linear-gradient(#7a2bd0 15%, #a43a7e 50%, #b34580); }
.banner h1 { margin-left: 10px; font: 13px/22px "Open Sans", sans-serif; color: #7c1113; white-space: nowrap; overflow: hidden; }
.winbtns { flex: none; display: flex; width: 97px; padding-left: 7px; }
.winbtns button { width: 24px; height: 18px; }
.winbtns .close { flex: 1; margin-left: 2px; background: #cb4c4b; }

/* tabs */
.tabs { flex: none; height: 23px; display: flex; border-bottom: 1px solid #a5aba5; background: linear-gradient(90deg, transparent 85%, #bcd980 99%), linear-gradient(#d7e9b6, #f0f5e2 60%, #fafcf5); color: #444; }
.tab { padding: 2px 13px 0; }
.file { width: 52px; margin-right: 4px; border-radius: 2px 2px 0 0; background: linear-gradient(#10796e, #1b9a87); color: #fff; font-weight: bold; border: 1px solid #0c6258; }
.home { width: 53px; border: 1px solid #a5aba5; border-bottom: 0; border-radius: 3px 3px 0 0; background: #fff; margin-bottom: -1px; height: 23px; }
.tdraw { width: 84px; padding: 2px 0 0; background: linear-gradient(#fba95e, #f7e3bd 40%, #fdf9ee); }
.ttext { width: 83px; padding: 2px 0 0; margin-left: 2px; background: linear-gradient(#cf8bb4, #e6d3d8 40%, #faf7f7); }
.mini { width: 18px; margin-right: 4px; }
.help { width: 14px; height: 14px; margin-top: 4px; border-radius: 50%; background: #3e74cc; color: #fff; font: bold 12px/14px "Open Sans", sans-serif; border: 1px solid #2c5bb0; }

/* ribbon */
.ribbon { flex: none; height: 81px; display: flex; background: linear-gradient(#fff, #fdfdfe 50%, #eceef3); border-bottom: 1px solid #898e99; position: relative; z-index: 2; }
.group { flex: none; display: flex; flex-direction: column; border-right: 1px solid #cfd3da; }
.clipboard { width: 142px; } .font { width: 229px; } .para { width: 186px; } .styles { width: 48px; }
.objects { width: 171px; } .arrange { width: 224px; } .editing { width: 70px; }
.group footer { height: 16px; display: flex; align-items: center; color: #66697a; padding-right: 5px; }
.group footer span { flex: 1; text-align: center; padding-left: 4px; }
.group footer span:not(:last-child) { padding: 0 8px 0 0; }
.font footer span { padding: 0 12px 0 0; }
.cols { flex: 1; display: flex; padding-top: 2px; }
.big { flex-direction: column; justify-content: flex-start; width: 40px; padding-top: 2px; line-height: 12px; }
.big span { margin-top: 4px; }
.big > .caret { margin-top: 4px; }
.clipboard .big { width: 47px; }
.styles .big { width: 47px; }
.objects .w48 { width: 48px; }
.stack { display: flex; flex-direction: column; gap: 1px; }
.stack button { height: 20px; gap: 3px; justify-content: flex-start; color: #222; }
.stack .caret { margin-left: 2px; }
.stack button:disabled { color: #9a9a9a; }
.stack button:disabled .caret { border-top-color: #aaa; }
.arrange .big { width: 46px; }
.arrange .stack { width: 107px; }
.arrange .stack + .stack { width: auto; }
.arrange .stack + .stack button { gap: 3px; }
.editing .stack { padding-left: 7px; }
.rows { flex: 1; padding: 9px 0 0 4px; }
.row { display: flex; align-items: center; height: 21px; }
.row + .row { margin-top: 6px; }
.face, .size { height: 20px; border: 1px solid #c6cad2; appearance: none; padding-left: 2px; background: linear-gradient(45deg, transparent 50%, #666 50%) right 6px center / 3px 3px no-repeat, linear-gradient(-45deg, transparent 50%, #666 50%) right 3px center / 3px 3px no-repeat, #fff; }
.face { width: 111px; }
.size { width: 39px; margin-left: -1px; }
.t { width: 22px; height: 21px; font-size: 13px; gap: 2px; color: #222; }
.t.wide { width: 30px; }
.t.wd { width: 28px; gap: 4px; }
.t sup, .t sub { font: bold 7px/7px "Liberation Sans", sans-serif; color: #3556a5; align-self: flex-start; margin-top: 3px; }
.t sub { align-self: flex-end; margin: 0 0 3px; }
.t:has(sup), .t:has(sub) { gap: 0; }
.grow-a { font-size: 15px; }
.shrink-a { width: 20px; font-size: 11px; }
.av { width: 28px; font: bold 10px/10px "Liberation Serif", serif; gap: 4px; }
.av span { border-bottom: 2px solid #5f86c8; }
.pil { width: 22px; font: 17px/20px "Liberation Serif", serif; }
.sep { width: 1px; height: 18px; margin: 0 4px; background: #d4d7dd; }
.font .row:first-child .sep { margin: 0 4px 0 3px; }
.para .rows { padding-left: 5px; }
.para .first { padding-left: 2px; }
.para .sep { margin: 0 3px; }
.on { border: 1px solid #c9962c; border-radius: 2px; background: linear-gradient(#fbd77c, #fce790); }
.drop { position: relative; }
.fcolor { width: 32px; height: 21px; border: 1px solid #c9962c; border-radius: 2px; background: linear-gradient(#f9c966, #fce08a); gap: 6px; font-size: 15px; line-height: 12px; color: #333f60; }
.fcolor .serif { border-bottom: 4px solid #000; width: 16px; }
.menu { position: absolute; left: 0; top: 21px; width: 145px; padding: 2px; background: #fff; border: 1px solid #a9adb6; border-radius: 2px; box-shadow: 2px 2px 3px rgba(0,0,0,.25); color: #333; }
.menu h2 { height: 15px; padding-left: 5px; font: 600 11px/14px "Open Sans", sans-serif; background: #eff0f5; color: #3a3a4a; }
.sw, .shades { display: flex; gap: 5px; padding: 3px 2px; }
.sw button { width: 11px; height: 11px; border: 1px solid #d8dade; }
.sw .pick { border: 2px solid #d8843a; }
#standard .pick { border: 1px solid #d99b30; }
.shades { padding-bottom: 4px; }
.shades div { width: 11px; }
.shades button { width: 11px; height: 12px; border: solid #e4e6ea; border-width: 0 1px; }
.menu ul { border-top: 1px solid #dcdee3; padding-top: 1px; }
.menu li button { height: 20px; width: 100%; justify-content: flex-start; padding-left: 3px; }
.menu li span { margin-left: 4px; padding-left: 8px; border-left: 1px solid #e2e4e8; line-height: 20px; }

/* workspace */
.work { flex: 1; min-height: 0; display: flex; background: #cbced6; }
.pane { width: 131px; flex: none; display: flex; flex-direction: column; padding-top: 2px; border: solid #9297a2; border-width: 0 1px 1px; }
.pane > header { flex: none; height: 26px; display: flex; align-items: center; justify-content: space-between; padding: 0 9px 0 5px; color: #444a58; background: linear-gradient(#c9ccd3, #b9bcc4); border-top: 1px solid #9a9fa9; }
.panebody { flex: 1; min-height: 0; display: flex; }
.left { flex: 1; min-width: 0; overflow: hidden; display: flex; flex-direction: column; }
.strip { flex: none; height: 14px; background: #bbbec6; padding: 4px 0 0 8px; border-bottom: 1px solid #a6aab3; }
.thumbs { flex: 1; min-height: 0; overflow: hidden; padding: 3px 0 0 6px; }
.thumbs li { width: 102px; height: 90px; margin-bottom: 3px; padding: 3px; text-align: center; border: 1px solid transparent; border-radius: 3px; }
.thumbs .cur { border-color: #d5b04c; background: linear-gradient(#dfbd66, #efd374 60%, #fff17c); }
.thumbs svg { background: #fff; box-shadow: 1px 1px 3px rgba(0,0,0,.4); }
.thumbs b { display: block; font: bold 11px/15px "Noto Sans", sans-serif; color: #222; }
.vbar { width: 16px; flex: none; display: flex; flex-direction: column; align-items: center; padding-top: 4px; background: #dfe2e9; }
.vbar .vthumb { width: 15px; height: 212px; margin-top: 5px; border: 1px solid #9aa0ac; background: linear-gradient(90deg, #f3f5f9, #dfe3ea); display: flex; align-items: center; justify-content: center; }
.vthumb i { width: 8px; height: 7px; background: repeating-linear-gradient(#8b919c 0 1px, transparent 1px 3px); }
.vbar .end { margin-top: auto; margin-bottom: 4px; }
.right { width: 11px; padding-top: 7px; overflow: hidden; }
.right .vthumb { width: 11px; height: 234px; margin-top: 109px; }
.right .end { display: grid; gap: 8px; margin-bottom: 20px; }

.editor { flex: 1; min-width: 0; position: relative; display: grid; grid-template-columns: 24px minmax(0, 1fr); grid-template-rows: 26px minmax(0, 1fr) 16px; }
.corner { padding: 5px 0 0 4px; border-right: 1px solid #8d929d; }
.corner span { display: block; width: 16px; height: 16px; border: 1px solid #6d727d; background: #fff; text-align: center; font: bold 12px/14px "Liberation Sans", sans-serif; }
.hruler, .vruler { overflow: hidden; font: 10px Roboto, sans-serif; fill: #555a66; }
.canvas { overflow: hidden; padding: 7px 0 0 246px; background: linear-gradient(#c2c5cd, #cbced6 6px); }
.page { position: relative; width: 619px; height: 478px; padding: 58px 55px 0 126px; background: #fff; box-shadow: 2px 2px 6px rgba(0,0,0,.55); color: #111; }
.deco { position: absolute; inset: 0; width: 619px; }
.letter { position: relative; display: flex; height: 45px; padding-left: 2px; font: 500 5px/7px "Open Sans", sans-serif; color: #000; }
.biz { width: 123px; display: flex; flex-direction: column; gap: 15px; }
.biz strong, .biz em { font-weight: bold; }
address { font-style: normal; width: 124px; white-space: nowrap; flex: none; }
.letter address + address { width: 104px; }
.org { display: flex; flex-direction: column; align-items: center; gap: 5px; padding-top: 3px; font: bold 11px/14px "DejaVu Serif", serif; }
.tbox { position: relative; height: 40px; margin-bottom: 19px; padding: 3px 0 0 2px; }
.sel { display: block; width: 130px; height: 32px; background: #000; color: #fff; font: 21px/32px "Liberation Serif", serif; }
.handles { position: absolute; left: -6px; top: -26px; }
.cal { position: relative; width: 437px; height: 270px; table-layout: fixed; border-collapse: collapse; border: 1px dashed #b5b5b5; }
.cal th { height: 16px; padding: 0 0 0 2px; text-align: left; font: 900 7px/9px "Open Sans", sans-serif; border-left: 1px dashed #b9b9b9; }
.cal td { height: 50px; padding: 2px 0 0 2px; vertical-align: top; font: 13px/14px "Liberation Sans", sans-serif; border-left: 1px dashed #b9b9b9; }
.cal tbody tr { border-top: 1px solid #444; }
.hbar { grid-column: 1 / -1; display: flex; align-items: center; padding: 0 5px; background: #dfe2ea; }
.htrack { flex: 1; height: 16px; padding: 0 207px 0 193px; }
.hthumb { height: 15px; border: 1px solid #9297a3; background: linear-gradient(#f1f3f8, #d9dde6); display: flex; align-items: center; justify-content: center; }
.hthumb i { width: 8px; height: 7px; background: repeating-linear-gradient(90deg, #7d828d 0 1px, transparent 1px 2px); }
.mark { position: absolute; right: 37px; bottom: 10px; width: 239px; color: rgba(140,142,148,.6); font: 14px/18px Roboto, sans-serif; white-space: nowrap; }
.mark p:first-child { font-size: 19px; line-height: 24px; }

/* status bar */
.status { flex: none; height: 22px; display: flex; align-items: center; padding-left: 8px; border-top: 1px solid #868b96; background: linear-gradient(#e8eaef, #c6c9d1 60%, #bbbfc8); color: #333; }
.status .vl { width: 1px; height: 17px; background: #9297a2; }
.pg { width: 70px; } .pg + .vl { margin-right: 8px; }
.pos { width: 80px; padding-left: 6px; } .dim { width: 96px; padding-left: 7px; }
.status > button { width: 18px; height: 17px; }
.pct { width: 37px; text-align: center; margin-left: 1px; }
.status .zoom { width: 14px; height: 14px; border: 1px solid #777; border-radius: 50%; background: #f5f6f8; font: 14px/12px "Liberation Sans", sans-serif; }
.status input { appearance: none; width: 92px; height: 14px; margin: 0 1px; background: linear-gradient(#8a8f9a, #8a8f9a) center / 100% 1px no-repeat; }
.status input::-webkit-slider-thumb { appearance: none; width: 9px; height: 12px; border: 1px solid #666; border-radius: 1px 1px 5px 5px; background: #fafafa; }
.status .fit { margin-left: 8px; width: 15px; overflow: hidden; }

/* taskbar */
.taskbar { flex: none; height: 37px; display: flex; align-items: stretch; color: #fff;
  background:
    radial-gradient(ellipse 90px 60px at 330px 40px, rgba(150,185,80,.6), transparent),
    radial-gradient(ellipse 200px 80px at 680px 10px, rgba(170,195,120,.75), transparent),
    radial-gradient(ellipse 70px 50px at 900px 10px, rgba(30,60,20,.5), transparent),
    radial-gradient(ellipse 160px 40px at 1050px 40px, rgba(120,180,40,.6), transparent),
    linear-gradient(#47702a, #4f8026); }
.start { width: 47px; }
.taskbar .app { width: 54px; margin: 0 2px; }
.taskbar .run { margin-bottom: 1px; border: 1px solid rgba(220,232,190,.6); background: rgba(210,225,180,.22); }
.taskbar .cur { background: rgba(240,248,220,.5); border-color: #e2ecc8; }
.ps { width: 27px; height: 26px; background: linear-gradient(#1f8be0, #0c5fb8); border: 1px solid #1a6ab5; color: #041a33; font: bold 15px/24px "Open Sans", sans-serif; text-align: center; }
.tray { display: flex; align-items: center; justify-content: space-between; width: 307px; margin-right: 8px; }
.tray svg { width: 15px; height: 15px; }
.clock { width: 64px; align-self: center; text-align: center; font: 12px/16px Roboto, sans-serif; margin-right: 3px; }
```
